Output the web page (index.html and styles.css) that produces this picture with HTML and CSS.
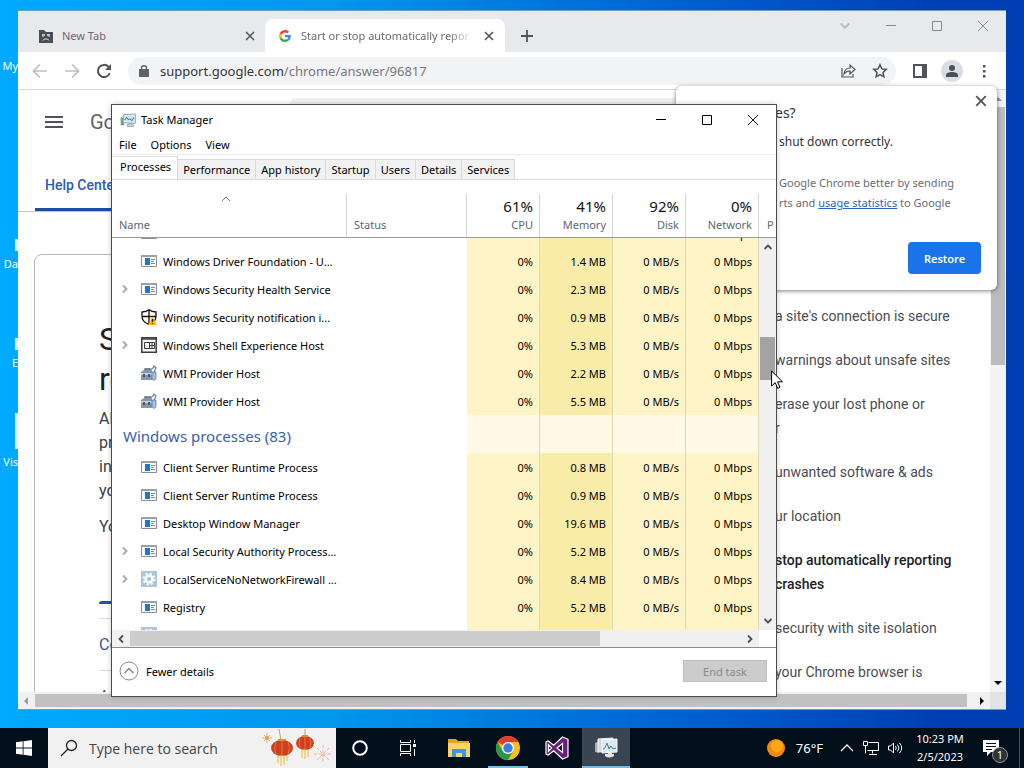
FILE: index.html
```html
<!DOCTYPE html>
<html lang="en">
  <head>
    <meta charset="UTF-8" />
    <meta name="viewport" content="width=device-width, initial-scale=1.0" />
    <title>Desktop</title>
    <link rel="stylesheet" href="styles.css">
  </head>
  <body>
    <!-- shared icons -->
    <svg class="defs" aria-hidden="true">
      <symbol id="i-app" viewBox="0 0 16 16">
        <path fill="#f8f9fa" stroke="#8a8f94" d="M.5 2.500h15v11H.5z" />
        <path fill="#9aa0a6" d="M0 2h16v2H0z" />
        <path fill="#1979ca" d="M4 5h5v7H4z" />
        <path stroke="#7d92a5" d="M10 6.500h4M10 8.500h3M10 10.500h4" />
      </symbol>
      <symbol id="i-shield" viewBox="0 0 16 16">
        <path fill="#fff" stroke="#111" stroke-width="1.300" d="M8 .8C6 2.400 3.500 3 1 3v4c0 4 3 7 7 8.500C12 14 15 11 15 7V3c-2.500 0-5-.6-7-2.200zM8 1v14M1 7.500h14" />
        <path fill="#fdb913" d="M11.500 7.500 16 16H7z" />
        <path stroke="#222" stroke-width="1.400" d="M11.500 10v3M11.500 14v1" />
      </symbol>
      <symbol id="i-shell" viewBox="0 0 16 16">
        <path fill="#fff" stroke="#3b3b3b" stroke-width="1.500" d="M.8.8h14.400v14.400H.8z" />
        <path stroke="#3b3b3b" stroke-width="1.500" d="M1 2h14" />
        <path fill="none" stroke="#3b3b3b" d="M3.500 5.500h10v6h-10zM8.500 5.500v6M8.500 8.500h5M11 5.500v6" />
      </symbol>
      <symbol id="i-wmi" viewBox="0 0 16 16">
        <path fill="none" stroke="#555f6b" stroke-width="1.300" d="M4 6V4h5v2" />
        <path fill="#8497ab" d="m0 7 3-2h8v10H0z" />
        <path fill="#c6d2de" d="M0 8h11v2H0z" />
        <path fill="#46566a" d="M2 9h2v3H2zM7 9h2v3H7z" />
        <path fill="#a5bfe8" stroke="#53719c" stroke-width=".7" d="M11 7h4v7l-2 1.500-2-1.500z" />
        <path fill="none" stroke="#7b8da1" stroke-width="1.400" d="m9 5 3-2 1-2 2 2-2 4" />
      </symbol>
      <symbol id="i-gear" viewBox="0 0 16 16">
        <path fill="#adc6da" d="M0 0h16v16H0z" />
        <circle cx="8" cy="8" r="3.400" fill="none" stroke="#fff" stroke-width="2.400" />
        <circle cx="8" cy="8" r="5.400" fill="none" stroke="#fff" stroke-width="2" stroke-dasharray="2.100 2.140" />
      </symbol>
      <symbol id="i-x" viewBox="0 0 10 10"><path fill="none" stroke="currentColor" stroke-width="1.500" d="m1 1 8 8M9 1 1 9" /></symbol>
      <symbol id="i-thin-x" viewBox="0 0 10 10"><path fill="none" stroke="currentColor" stroke-width=".9" d="m0 0 10 10M10 0 0 10" /></symbol>
      <symbol id="i-max" viewBox="0 0 10 10"><path fill="none" stroke="currentColor" d="M.5 .5h9v9h-9z" /></symbol>
      <symbol id="i-min" viewBox="0 0 10 10"><path stroke="currentColor" d="M0 4.500h10" /></symbol>
      <symbol id="i-up" viewBox="0 0 10 10"><path fill="none" stroke="currentColor" stroke-width="1.800" d="m1.500 7 3.500-3.500L8.500 7" /></symbol>
      <symbol id="i-down" viewBox="0 0 10 10"><path fill="none" stroke="currentColor" stroke-width="1.800" d="M1.500 3 5 6.500 8.500 3" /></symbol>
      <symbol id="i-left" viewBox="0 0 10 10"><path fill="none" stroke="currentColor" stroke-width="1.800" d="M7 1.500 3.500 5 7 8.500" /></symbol>
      <symbol id="i-right" viewBox="0 0 10 10"><path fill="none" stroke="currentColor" stroke-width="1.800" d="M3 1.500 6.500 5 3 8.500" /></symbol>
      <symbol id="i-monitor" viewBox="0 0 24 24">
        <path fill="#8b9398" d="M1 8h5v12H1z" />
        <path fill="#5fae63" d="M2 10h2v8H2z" />
        <path fill="#e9f6fb" stroke="#8fa3ad" stroke-width="1.500" d="m5 4 18-1v14l-18-1z" />
        <path fill="#c6e4ef" d="m7 6 14-1v10L7 14z" />
        <path fill="none" stroke="#287aa9" stroke-width="1.500" d="m7 12 3-4 3 4 2-2 3 3 3-5" />
        <path fill="#cfd5d8" stroke="#89949a" d="M13 17h4v2h3v3h-9v-3h2z" />
      </symbol>
    </svg>

    <main class="desktop">
      <div class="shortcut shortcut-1">My</div>
      <div class="shortcut shortcut-2"><span class="shortcut-icon"></span>Da</div>
      <div class="shortcut shortcut-3"><span class="shortcut-icon"></span>E</div>
      <div class="shortcut shortcut-4"><span class="shortcut-icon tall"></span>Vis</div>

      <!-- browser window -->
      <section class="browser">
        <div class="tab-strip">
          <div class="browser-tab">
            <svg class="icon-16" viewBox="0 0 16 16"><path fill="#4a4d51" d="M1 2h5l2 2h7v11H1z" /><path stroke="#e8eaed" stroke-width="1.300" d="M4 7h3M9 7h3" /><path fill="none" stroke="#e8eaed" d="M5 12.500 6.500 11h3l1.500 1.500M5 8v1M11 8v1" /></svg>
            <span class="tab-title">New Tab</span>
            <button class="icon-btn" aria-label="Close tab"><svg class="icon-10"><use href="#i-x" /></svg></button>
          </div>
          <div class="browser-tab active">
            <svg class="icon-12" viewBox="0 0 48 48"><path fill="#ea4335" d="M24 9.500c3.540 0 6.710 1.220 9.210 3.600l6.850-6.850C35.900 2.380 30.470 0 24 0 14.620 0 6.510 5.380 2.560 13.220l7.980 6.190C12.430 13.720 17.740 9.500 24 9.500z" /><path fill="#4285f4" d="M46.980 24.550c0-1.570-.15-3.090-.38-4.550H24v9.020h12.940c-.58 2.960-2.260 5.480-4.780 7.180l7.730 6c4.510-4.180 7.090-10.360 7.090-17.650z" /><path fill="#fbbc05" d="M10.530 28.590c-.48-1.450-.76-2.990-.76-4.590s.27-3.140.76-4.590l-7.980-6.190C.92 16.460 0 20.120 0 24c0 3.880.92 7.540 2.560 10.780l7.970-6.190z" /><path fill="#34a853" d="M24 48c6.480 0 11.930-2.130 15.890-5.810l-7.730-6c-2.150 1.450-4.920 2.300-8.160 2.300-6.260 0-11.570-4.220-13.470-9.910l-7.980 6.190C6.510 42.620 14.620 48 24 48z" /></svg>
            <span class="tab-title">Start or stop automatically repor</span>
            <button class="icon-btn" aria-label="Close tab"><svg class="icon-10"><use href="#i-x" /></svg></button>
          </div>
          <button class="icon-btn new-tab" aria-label="New tab"><svg class="icon-12" viewBox="0 0 12 12"><path stroke="currentColor" stroke-width="1.800" d="M6 0v12M0 6h12" /></svg></button>
          <div class="captions">
            <button class="caption pale" aria-label="Search tabs"><svg class="icon-12"><use href="#i-down" /></svg></button>
            <button class="caption" aria-label="Minimize"><svg class="icon-10"><use href="#i-min" /></svg></button>
            <button class="caption" aria-label="Maximize"><svg class="icon-10"><use href="#i-max" /></svg></button>
            <button class="caption" aria-label="Close"><svg class="icon-10"><use href="#i-thin-x" /></svg></button>
          </div>
        </div>

        <div class="toolbar">
          <button class="icon-btn faded" aria-label="Back"><svg class="icon-16" viewBox="0 0 16 16"><path fill="none" stroke="currentColor" stroke-width="1.700" d="M15 8H2M8 1.500 1.500 8 8 14.500" /></svg></button>
          <button class="icon-btn faded" aria-label="Forward"><svg class="icon-16" viewBox="0 0 16 16"><path fill="none" stroke="currentColor" stroke-width="1.700" d="M1 8h13M8 1.500 14.500 8 8 14.500" /></svg></button>
          <button class="icon-btn" aria-label="Reload"><svg class="icon-16" viewBox="0 0 16 16"><path fill="none" stroke="currentColor" stroke-width="2" d="M13.800 10A6.100 6.100 0 1 1 12.500 3.800L14 5.500" /><path fill="currentColor" d="M15 1v6H9z" /></svg></button>
          <div class="address">
            <svg class="icon-12" viewBox="0 0 12 12"><path fill="#5f6368" d="M1 4h10v8H1z" /><path fill="none" stroke="#5f6368" stroke-width="1.400" d="M3.500 5V3a2.500 2.300 0 0 1 5 0v2" /></svg>
            <span class="url"><b>support.google.com</b>/chrome/answer/96817</span>
            <button class="icon-btn" aria-label="Share"><svg class="icon-16" viewBox="0 0 16 16"><path fill="none" stroke="currentColor" stroke-width="1.200" d="M2 5v9h11v-3M4 11c.5-4 3-6 6-6V2l5 4.500L10 11V8c-3 0-4.500 1-6 3z" /></svg></button>
            <button class="icon-btn" aria-label="Bookmark"><svg class="icon-16" viewBox="0 0 16 16"><path fill="none" stroke="currentColor" stroke-width="1.500" d="m8 1.800 1.900 4.100 4.400.5-3.300 3 .9 4.400L8 11.600l-3.900 2.200.9-4.400-3.300-3 4.400-.5z" /></svg></button>
          </div>
          <div class="tools">
            <button class="icon-btn" aria-label="Side panel"><svg class="icon-16" viewBox="0 0 16 16"><path fill="none" stroke="currentColor" stroke-width="2" d="M2 2h12v12H2z" /><path fill="currentColor" d="M10 2h5v12h-5z" /></svg></button>
            <button class="icon-btn profile" aria-label="Profile"><svg class="icon-16" viewBox="0 0 16 16"><circle cx="8" cy="5" r="3" fill="#4c5055" /><path fill="#4c5055" d="M2 14v-2c0-4 12-4 12 0v2z" /></svg></button>
            <button class="icon-btn" aria-label="Menu"><svg class="icon-16" viewBox="0 0 16 16"><path fill="currentColor" d="M7 2h2.500v2.500H7zM7 7h2.500v2.500H7zM7 12h2.500v2.500H7z" /></svg></button>
          </div>
        </div>

        <div class="viewport">
          <div class="page">
            <header class="page-header">
              <button class="icon-btn" aria-label="Main menu"><svg class="icon-18" viewBox="0 0 18 18"><path stroke="currentColor" stroke-width="2" d="M0 4h18M0 9h18M0 14h18" /></svg></button>
              <span class="logo">Google</span>
              <input class="page-search" type="text" aria-label="Search help" />
            </header>
            <nav class="page-nav"><a href="#">Help Center</a></nav>
            <div class="page-columns">
              <article class="article">
                <h1>Start<br />report</h1>
                <p>Allow<br />problem<br />in Chrome<br />you use</p>
                <p>You can</p>
                <div class="article-tab"></div>
                <a class="article-link" href="#">Computer</a>
                <a class="article-link" href="#">Android</a>
              </article>
              <ul class="related">
                <li><a href="#">a site's connection is secure</a></li>
                <li><a href="#">warnings about unsafe sites</a></li>
                <li><a href="#">erase your lost phone or<br />r</a></li>
                <li><a href="#">unwanted software &amp; ads</a></li>
                <li><a href="#">ur location</a></li>
                <li><a class="current" href="#">stop automatically reporting<br />crashes</a></li>
                <li><a href="#">security with site isolation</a></li>
                <li><a href="#">your Chrome browser is</a></li>
              </ul>
            </div>
          </div>
          <div class="page-vscroll"><svg class="icon-10 faint" viewBox="0 0 10 10"><path d="m1 7 4-4 4 4z" /></svg><span class="page-vthumb"></span><svg class="icon-10" viewBox="0 0 10 10"><path d="m1 3 4 4 4-4z" /></svg></div>
          <div class="page-hscroll"><svg class="icon-10 faint" viewBox="0 0 10 10"><path d="M7 1 3 5l4 4z" /></svg><span class="page-hthumb"></span><svg class="icon-10" viewBox="0 0 10 10"><path d="m3 1 4 4-4 4z" /></svg></div>
          <div class="scroll-corner"></div>
        </div>

        <aside class="bubble">
          <button class="icon-btn bubble-close" aria-label="Close"><svg class="icon-12"><use href="#i-x" /></svg></button>
          <h2>es?</h2>
          <p class="bubble-text">shut down correctly.</p>
          <p class="bubble-note">Google Chrome better by sending<br />rts and <a href="#">usage statistics</a> to Google</p>
          <button class="restore">Restore</button>
        </aside>
      </section>

      <!-- task manager window -->
      <section class="taskman">
        <div class="titlebar">
          <svg class="icon-16"><use href="#i-monitor" /></svg>
          <span class="title">Task Manager</span>
          <button class="caption" aria-label="Minimize"><svg class="icon-10"><use href="#i-min" /></svg></button>
          <button class="caption" aria-label="Maximize"><svg class="icon-10"><use href="#i-max" /></svg></button>
          <button class="caption" aria-label="Close"><svg class="icon-10"><use href="#i-thin-x" /></svg></button>
        </div>
        <div class="menubar"><button>File</button><button>Options</button><button>View</button></div>
        <div class="tabs" role="tablist">
          <button role="tab" aria-selected="true" class="selected">Processes</button>
          <button role="tab">Performance</button>
          <button role="tab">App history</button>
          <button role="tab">Startup</button>
          <button role="tab">Users</button>
          <button role="tab">Details</button>
          <button role="tab">Services</button>
        </div>

        <table class="grid grid-head">
          <colgroup><col class="c-name" /><col class="c-status" /><col class="c-num" /><col class="c-num" /><col class="c-num" /><col class="c-num" /><col /></colgroup>
          <thead>
            <tr>
              <th class="left"><svg class="sort" viewBox="0 0 10 10"><path fill="none" stroke="#777" d="m1 7 4-4 4 4" /></svg>Name</th>
              <th class="left">Status</th>
              <th><strong>61%</strong>CPU</th>
              <th><strong>41%</strong>Memory</th>
              <th><strong>92%</strong>Disk</th>
              <th><strong>0%</strong>Network</th>
              <th class="last">P</th>
            </tr>
          </thead>
        </table>

        <div class="list">
          <div class="rows">
            <table class="grid grid-body">
              <colgroup><col class="c-name" /><col class="c-status" /><col class="c-num" /><col class="c-num" /><col class="c-num" /><col /></colgroup>
              <tbody>
                <tr><td><div class="proc"><svg class="icon-16"><use href="#i-app" /></svg></div></td><td></td><td></td><td class="mem"></td><td>0 MB/s</td><td>0 Mbps</td></tr>
                <tr><td><div class="proc"><svg class="icon-16"><use href="#i-app" /></svg>Windows Driver Foundation - U...</div></td><td></td><td>0%</td><td class="mem">1.4 MB</td><td>0 MB/s</td><td>0 Mbps</td></tr>
                <tr><td><div class="proc"><svg class="expand"><use href="#i-right" /></svg><svg class="icon-16"><use href="#i-app" /></svg>Windows Security Health Service</div></td><td></td><td>0%</td><td class="mem">2.3 MB</td><td>0 MB/s</td><td>0 Mbps</td></tr>
                <tr><td><div class="proc"><svg class="icon-16"><use href="#i-shield" /></svg>Windows Security notification i...</div></td><td></td><td>0%</td><td class="mem">0.9 MB</td><td>0 MB/s</td><td>0 Mbps</td></tr>
                <tr><td><div class="proc"><svg class="expand"><use href="#i-right" /></svg><svg class="icon-16"><use href="#i-shell" /></svg>Windows Shell Experience Host</div></td><td></td><td>0%</td><td class="mem">5.3 MB</td><td>0 MB/s</td><td>0 Mbps</td></tr>
                <tr><td><div class="proc"><svg class="icon-16"><use href="#i-wmi" /></svg>WMI Provider Host</div></td><td></td><td>0%</td><td class="mem">2.2 MB</td><td>0 MB/s</td><td>0 Mbps</td></tr>
                <tr><td><div class="proc"><svg class="icon-16"><use href="#i-wmi" /></svg>WMI Provider Host</div></td><td></td><td>0%</td><td class="mem">5.5 MB</td><td>0 MB/s</td><td>0 Mbps</td></tr>
                <tr class="group"><td colspan="2">Windows processes (83)</td><td></td><td></td><td></td><td></td></tr>
                <tr><td><div class="proc"><svg class="icon-16"><use href="#i-app" /></svg>Client Server Runtime Process</div></td><td></td><td>0%</td><td class="mem">0.8 MB</td><td>0 MB/s</td><td>0 Mbps</td></tr>
                <tr><td><div class="proc"><svg class="icon-16"><use href="#i-app" /></svg>Client Server Runtime Process</div></td><td></td><td>0%</td><td class="mem">0.9 MB</td><td>0 MB/s</td><td>0 Mbps</td></tr>
                <tr><td><div class="proc"><svg class="icon-16"><use href="#i-app" /></svg>Desktop Window Manager</div></td><td></td><td>0%</td><td class="mem">19.6 MB</td><td>0 MB/s</td><td>0 Mbps</td></tr>
                <tr><td><div class="proc"><svg class="expand"><use href="#i-right" /></svg><svg class="icon-16"><use href="#i-app" /></svg>Local Security Authority Process...</div></td><td></td><td>0%</td><td class="mem">5.2 MB</td><td>0 MB/s</td><td>0 Mbps</td></tr>
                <tr><td><div class="proc"><svg class="expand"><use href="#i-right" /></svg><svg class="icon-16"><use href="#i-gear" /></svg>LocalServiceNoNetworkFirewall ...</div></td><td></td><td>0%</td><td class="mem">8.4 MB</td><td>0 MB/s</td><td>0 Mbps</td></tr>
                <tr><td><div class="proc"><svg class="icon-16"><use href="#i-app" /></svg>Registry</div></td><td></td><td>0%</td><td class="mem">5.2 MB</td><td>0 MB/s</td><td>0 Mbps</td></tr>
                <tr><td><div class="proc"><svg class="icon-16"><use href="#i-gear" /></svg></div></td><td></td><td></td><td class="mem"></td><td></td><td></td></tr>
              </tbody>
            </table>
          </div>
          <div class="vscroll"><svg class="icon-10"><use href="#i-up" /></svg><span class="vthumb"></span><svg class="icon-10"><use href="#i-down" /></svg></div>
        </div>
        <div class="hscroll"><svg class="icon-10"><use href="#i-left" /></svg><span class="htrack"><span class="hthumb"></span></span><svg class="icon-10"><use href="#i-right" /></svg></div>

        <div class="statusbar">
          <button class="fewer"><svg class="icon-20" viewBox="0 0 20 20"><circle cx="10" cy="10" r="9" fill="#fff" stroke="#8a8a8a" /><path fill="none" stroke="#8a8a8a" stroke-width="1.500" d="m5.500 12 4.500-4.500 4.500 4.500" /></svg>Fewer details</button>
          <button class="end-task" disabled>End task</button>
        </div>
      </section>

      <svg class="cursor" viewBox="0 0 12 19"><path fill="#fff" stroke="#000" d="M.6 1v15l3.600-3.300 2.500 5.600 2.300-1-2.500-5.500h5z" /></svg>
    </main>

    <footer class="taskbar">
      <button class="task-btn" aria-label="Start"><svg class="icon-16" viewBox="0 0 16 16"><path fill="#fff" d="m0 2.300 6.700-1v6.300H0zM7.500 1.200 16 0v7.600H7.500zM0 8.400h6.700v6.300l-6.700-1zM7.500 8.400H16V16l-8.500-1.200z" /></svg></button>
      <label class="search">
        <svg class="icon-18" viewBox="0 0 18 18"><circle cx="11.500" cy="6.500" r="5" fill="none" stroke="#222" stroke-width="1.300" /><path stroke="#222" stroke-width="1.300" d="m8 10-7 7" /></svg>
        <input type="text" placeholder="Type here to search" aria-label="Type here to search" />
        <svg class="lanterns" viewBox="0 0 70 38">
          <path fill="none" stroke="#eeb46c" d="M6 4v10M1 9h10M3 6l6 6M9 6l-6 6" />
          <circle cx="6" cy="9" r="2" fill="#e9a04b" />
          <path fill="none" stroke="#f0a08c" stroke-width=".8" d="M62 16v18M53 25h17M56 19l12 12M68 19 56 31" stroke-dasharray="3 1.500" />
          <path stroke="#b58a60" stroke-width=".8" d="M18 0l2 11M44 0v8" />
          <path stroke="#f2c84f" stroke-width="1.200" d="M17 26v8M20 26v11M23 26v10M26 26v6M41 21v8M44 21v9M47 21v7" />
          <ellipse cx="21" cy="19" rx="11" ry="8" fill="#cf4020" /><path fill="none" stroke="#e8743a" d="M15 13q-3 6 0 12M21 11v16M27 13q3 6 0 12" />
          <ellipse cx="44" cy="14" rx="9" ry="7" fill="#cf4020" /><path fill="none" stroke="#e8743a" d="M39 9q-2 5 0 10M44 7v14M49 9q2 5 0 10" />
          <path fill="#dc8f2b" d="M17 10h8v2h-8zM17 26h8v1h-8zM41 6h6v2h-6zM41 20h6v1h-6z" />
        </svg>
      </label>
      <button class="task-btn" aria-label="Cortana"><svg class="icon-16" viewBox="0 0 16 16"><circle cx="8" cy="8" r="6.800" fill="none" stroke="#fff" stroke-width="2" /></svg></button>
      <button class="task-btn" aria-label="Task view"><svg class="icon-18" viewBox="0 0 18 18"><path fill="none" stroke="#fff" d="M1.500 5.500h10v7h-10zM1.500 1v2.500h10V1M1.500 17v-2.500h10V17M15.500 1v3M15.500 10v7" /><path fill="#fff" d="M14 5h3v3h-3z" /></svg></button>
      <div class="pinned">
        <button class="task-btn" aria-label="File Explorer"><svg class="icon-24" viewBox="0 0 24 24"><path fill="#e9a023" d="M1 3h8l2 2h11v5H1z" /><path fill="#fcd462" d="M1 7h22v14H1z" /><path fill="#3a9bdc" d="M5 13h14v8h-4v-4H9v4H5z" /></svg></button>
        <button class="task-btn running" aria-label="Google Chrome"><svg class="icon-24" viewBox="0 0 24 24"><circle cx="12" cy="12" r="12" fill="#fbc116" /><path fill="#e33b2e" d="M12 12 1.600 6A12 12 0 0 1 22.400 6H12z" /><path fill="#26994a" d="M1.600 6A12 12 0 0 0 12 24l5.200-9L12 12 6.800 15z" /><circle cx="12" cy="12" r="6" fill="#fff" /><circle cx="12" cy="12" r="4.700" fill="#3c7de6" /></svg></button>
        <button class="task-btn" aria-label="Visual Studio"><svg class="icon-24" viewBox="0 0 24 24"><path fill="#68217a" stroke="#fff" stroke-width="1.200" d="m17.500 1 5.500 2.300v17.400L17.500 23 8.700 14.800 3.200 19 1 18V6l2.200-1 5.500 4.200zM17.500 7.500 12 12l5.500 4.500zM3.500 8.800v6.400L6.500 12z" fill-rule="evenodd" /></svg></button>
        <button class="task-btn open" aria-label="Task Manager"><svg class="icon-24" viewBox="0 0 24 24">
          <path fill="#a9afb3" d="m1 8 4-2v12l-4-1z" />
          <path fill="#d5dadd" stroke="#f1f3f4" d="m4 4 15-1v13L4 17z" />
          <path fill="#dce9ef" stroke="#f6f8f9" d="m8 5 15-1v13l-15 1z" />
          <path fill="none" stroke="#4487a8" d="m9 14 2-1 2-5 2 6 2-3 2 3 3-1" />
          <path fill="#e2e4e5" d="M14 18h4v1h2v2q-5 3-9 0v-2h3z" />
        </svg></button>
      </div>
      <div class="tray">
        <button class="weather"><svg class="icon-18" viewBox="0 0 18 18"><circle cx="9" cy="9" r="9" fill="#f58a07" /><circle cx="10" cy="7" r="6" fill="#fca81c" /></svg>76°F</button>
        <button class="tray-btn" aria-label="Hidden icons"><svg class="icon-14" viewBox="0 0 14 14"><path fill="none" stroke="#fff" stroke-width="1.300" d="m1 10 6-6 6 6" /></svg></button>
        <button class="tray-btn" aria-label="Network"><svg class="icon-16" viewBox="0 0 16 16"><path fill="none" stroke="#fff" d="M5.500 2.500h10v8h-11M9.500 10.500v3M6 14.500h8M.5 1.500h4v4h-4zM2.500 5.500v8" /></svg></button>
        <button class="tray-btn" aria-label="Volume"><svg class="icon-16" viewBox="0 0 16 16"><path fill="none" stroke="#fff" d="M1.500 6h2l3-3v10l-3-3h-2zM8.500 6q1.500 2 0 4M10.500 4.500q3 3.500 0 7M12.500 3q4.500 5 0 10" /></svg></button>
        <button class="clock">10:23 PM<br />2/5/2023</button>
        <button class="notify" aria-label="Notifications"><svg class="icon-18" viewBox="0 0 18 18"><path fill="#fff" d="M1 1h16v12H9l-4 4v-4H1z" /><path stroke="#06111c" d="M4 4.500h10M4 7.500h10M4 10.500h6" /></svg><span class="badge">1</span></button>
      </div>
    </footer>
  </body>
</html>
```

FILE: styles.css
```css
* {
  box-sizing: border-box;
}

body {
  margin: 0;
  height: 100vh;
  display: flex;
  flex-direction: column;
  overflow: hidden;
  font-family: "Noto Sans", "Open Sans", sans-serif;
  font-size: 11px;
  color: #000;
}

button,
input {
  font: inherit;
  color: inherit;
  border: none;
  background: none;
  padding: 0;
  margin: 0;
}

svg {
  display: block;
  flex: none;
}

.defs {
  position: absolute;
  width: 0;
  height: 0;
}

.icon-10 { width: 10px; height: 10px; }
.icon-12 { width: 12px; height: 12px; }
.icon-14 { width: 14px; height: 14px; }
.icon-16 { width: 16px; height: 16px; }
.icon-18 { width: 18px; height: 18px; }
.icon-20 { width: 20px; height: 20px; }
.icon-24 { width: 24px; height: 24px; }

/* ===== desktop ===== */
.desktop {
  position: relative;
  flex: 1;
  min-height: 0;
  overflow: hidden;
  background: linear-gradient(to right, #00aaff, #0096ec 33%, #0062d2 66%, #003eb4 92%);
}

.shortcut {
  position: absolute;
  left: 0;
  width: 18px;
  display: flex;
  flex-direction: column;
  align-items: flex-end;
  color: #fff;
}

.shortcut-icon {
  width: 3px;
  height: 12px;
  margin-bottom: 5px;
  background: #dceefa;
}

.shortcut-icon.tall {
  height: 36px;
}

.shortcut-1 { top: 58px; }
.shortcut-2 { top: 239px; }
.shortcut-3 { top: 338px; }
.shortcut-4 { top: 413px; }

/* ===== browser ===== */
.browser {
  position: absolute;
  inset: 10px 18px 18px 18px;
  display: flex;
  flex-direction: column;
  background: #fff;
  border: 1px solid #6f9cc0;
  border-width: 1px 0;
}

.icon-btn {
  flex: none;
  display: flex;
  align-items: center;
  justify-content: center;
  color: #505357;
}

.tab-strip {
  display: flex;
  height: 41px;
  padding-left: 7px;
  background: #e8e9ec;
}

.browser-tab {
  display: flex;
  align-items: center;
  gap: 8px;
  width: 240px;
  margin-top: 8px;
  padding: 0 10px 0 13px;
  border-radius: 8px 8px 0 0;
  color: #686b70;
}

.browser-tab.active {
  gap: 10px;
  padding: 0 11px 0 14px;
  background: #fff;
}

.tab-title {
  flex: 1;
  overflow: hidden;
  white-space: nowrap;
}

.active .tab-title {
  mask-image: linear-gradient(to right, #000 85%, transparent);
}

.new-tab {
  width: 44px;
  margin-top: 8px;
}

.captions {
  display: flex;
  margin-left: auto;
}

.caption {
  width: 46px;
  height: 30px;
  display: flex;
  align-items: center;
  justify-content: center;
}

.captions .caption {
  color: #888;
}

.captions .pale {
  color: #b3c0cf;
}

.toolbar {
  display: flex;
  align-items: center;
  gap: 16px;
  height: 38px;
  padding: 0 14px;
  border-bottom: 1px solid #d8dadd;
}

.toolbar .faded {
  color: #bcbec1;
}

.tools {
  display: flex;
  align-items: center;
  gap: 13px;
}

.address {
  flex: 1;
  display: flex;
  align-items: center;
  gap: 16px;
  height: 28px;
  padding: 0 8px 0 10px;
  border-radius: 14px;
  background: #f1f3f4;
}

.address .icon-12 {
  margin-right: -6px;
}

.url {
  flex: 1;
  font-size: 13px;
  color: #777a7e;
}

.url b {
  font-weight: normal;
  color: #333639;
}

.profile {
  width: 22px;
  height: 22px;
  border-radius: 50%;
  background: #d9dee4;
}

.viewport {
  flex: 1;
  min-height: 0;
  display: grid;
  grid-template-columns: 1fr 16px;
  grid-template-rows: 1fr 17px;
}

.page {
  overflow: hidden;
  font-family: Roboto, sans-serif;
  color: #3c4043;
}

.page-header {
  display: flex;
  align-items: center;
  gap: 27px;
  height: 64px;
  padding: 0 27px;
}

.logo {
  width: 172px;
  font-size: 20px;
  color: #5f6368;
}

.page-search {
  flex: 1;
  height: 48px;
  border-radius: 8px;
  background: #f0f1f2;
}

.page-nav {
  height: 58px;
  border-bottom: 1px solid #c2c4c7;
  padding-left: 17px;
  display: flex;
}

.page-nav a {
  padding: 23px 10px 0;
  border-bottom: 3px solid #1a4fa0;
  font-size: 14px;
  font-weight: 500;
  color: #2a5db5;
  text-decoration: none;
}

.page-columns {
  display: flex;
  gap: 80px;
  padding: 42px 16px 0;
}

.article {
  flex: 1;
  height: 520px;
  padding: 64px 0 0 64px;
  border: 1px solid #b5b7ba;
  border-radius: 8px;
  font-size: 16px;
  line-height: 24px;
}

.article h1 {
  margin: 0 0 8px;
  font-size: 32px;
  font-weight: normal;
  line-height: 40px;
  color: #202124;
}

.article p {
  margin: 0 0 12px;
}

.article-tab {
  margin: 62px 0 14px;
  height: 3px;
  border-radius: 4px 4px 0 0;
  background: #2a4f9c;
}

.article-link {
  display: block;
  padding: 14px 0 13px;
  border-top: 1px solid #dadce0;
  color: #3553a0;
  text-decoration: none;
}

.related {
  width: 199px;
  margin: 50px 0 0;
  padding: 0;
  list-style: none;
  display: flex;
  flex-direction: column;
  gap: 20px;
  font-size: 14px;
  line-height: 24px;
  white-space: nowrap;
}

.related a {
  color: #4a4d51;
  text-decoration: none;
}

.related .current {
  color: #202124;
  font-weight: 500;
}

.page-vscroll {
  display: flex;
  flex-direction: column;
  align-items: center;
  padding: 4px 0;
  background: #f4f2f3;
}

.page-vthumb {
  width: 14px;
  height: 258px;
  margin: 3px 0 auto;
  background: #bdbbbd;
}

.page-hscroll {
  display: flex;
  align-items: center;
  gap: 4px;
  padding: 0 3px;
  background: #f1f1f1;
}

.page-hthumb {
  flex: 1;
  height: 13px;
  margin-right: 6px;
  background: #c1c1c1;
}

.scroll-corner {
  background: #e2e3e4;
}

.faint {
  fill: #999;
}

/* ===== restore bubble ===== */
.bubble {
  position: absolute;
  top: 75px;
  right: 9px;
  width: 321px;
  padding: 18px 16px 16px 103px;
  border-radius: 6px;
  background: #fff;
  box-shadow: 0 1px 4px rgba(0, 0, 0, 0.5);
  display: flex;
  flex-direction: column;
}

.bubble-close {
  position: absolute;
  top: 9px;
  right: 10px;
}

.bubble h2 {
  margin: 0 0 10px -4px;
  font-size: 14px;
  font-weight: normal;
  line-height: 18px;
  color: #333;
}

.bubble p {
  margin: 0;
  line-height: 20px;
  white-space: nowrap;
}

.bubble-text {
  font-size: 12px;
  color: #333;
}

.bubble .bubble-note {
  margin: 21px 0 29px;
  color: #6a6d71;
}

.bubble a {
  color: #2b62c4;
}

.restore {
  align-self: flex-end;
  width: 73px;
  height: 32px;
  border-radius: 4px;
  background: #1a73e8;
  color: #fff;
  font-weight: 600;
}

/* ===== task manager ===== */
.taskman {
  position: absolute;
  inset: 104px 247px 31px 111px;
  display: flex;
  flex-direction: column;
  background: #fff;
  border: 1px solid #4c4c4c;
  box-shadow: 0 0 6px rgba(0, 0, 0, 0.2);
}

.titlebar {
  display: flex;
  align-items: center;
  height: 29px;
  padding-left: 8px;
  gap: 5px;
}

.titlebar .caption + .caption {
  margin-left: -5px;
}

.title {
  flex: 1;
}

.menubar {
  display: flex;
  gap: 14px;
  height: 21px;
  padding-left: 7px;
  border-bottom: 1px solid #ececec;
}

.tabs {
  display: flex;
  align-items: flex-end;
  height: 25px;
  border-bottom: 1px solid #dcdcdc;
}

.tabs button {
  height: 20px;
  padding: 0 5px;
  border: 1px solid #dadada;
  border-width: 1px 1px 0 0;
  background: #f1f1f1;
}

.tabs .selected {
  height: 23px;
  padding: 0 6px 3px 8px;
  background: #fff;
}

.grid {
  width: 100%;
  table-layout: fixed;
  border-collapse: separate;
  border-spacing: 0;
}

.c-name { width: 235px; }
.c-status { width: 120px; }
.c-num { width: 73px; }

.grid-head {
  margin-top: 14px;
  border-bottom: 1px solid #9a9a9a;
}

.grid-head th {
  position: relative;
  height: 43px;
  padding: 0 6px 4px;
  border-right: 1px solid #d4d4d4;
  text-align: right;
  vertical-align: bottom;
  font-weight: normal;
  line-height: 16px;
  color: #5c6672;
}

.grid-head .left {
  padding-left: 7px;
  text-align: left;
}

.grid-head .last {
  border-right: none;
  padding: 0 0 4px 8px;
  text-align: left;
}

.grid-head strong {
  display: block;
  font-size: 15px;
  font-weight: normal;
  line-height: 22px;
  color: #111;
}

.sort {
  position: absolute;
  top: 0;
  left: 50%;
  width: 10px;
  height: 10px;
  margin-left: -8px;
}

.list {
  flex: 1;
  min-height: 0;
  display: flex;
}

.rows {
  flex: 1;
  overflow: hidden;
}

/* list is scrolled part of a row down */
.grid-body {
  margin-top: -19px;
}

.grid-body td {
  height: 28px;
  padding: 0 6px 0 0;
  text-align: right;
  white-space: nowrap;
}

.grid-body td:nth-last-child(-n + 4) {
  background: #fff4c5;
  border-right: 1px solid #dfd8b4;
}

.grid-body td.mem:nth-last-child(-n + 4) {
  background: #f9eca8;
}

.proc {
  display: flex;
  align-items: center;
  justify-content: flex-start;
  gap: 6px;
  padding-left: 29px;
}

.expand {
  width: 10px;
  height: 10px;
  margin: 0 5px 0 -21px;
  color: #a8a8a8;
}

.grid-body .group td {
  height: 38px;
}

.grid-body .group td:first-child {
  padding: 4px 0 0 11px;
  text-align: left;
  font-size: 15px;
  color: #3a5eae;
}

.grid-body .group td:nth-last-child(-n + 4) {
  background: #fff9e6;
}

.vscroll {
  width: 17px;
  display: flex;
  flex-direction: column;
  align-items: center;
  padding: 4px 0;
  background: #f0f0f0;
  color: #505050;
}

.vthumb {
  width: 15px;
  height: 43px;
  margin: 85px 0 auto;
  background: #a3a3a3;
}

.hscroll {
  display: flex;
  align-items: center;
  gap: 4px;
  height: 17px;
  margin-right: 17px;
  padding: 0 4px;
  background: #f0f0f0;
  color: #505050;
}

.htrack {
  flex: 1;
  height: 15px;
}

.hthumb {
  display: block;
  width: 77%;
  height: 15px;
  background: #cdcdcd;
}

.statusbar {
  display: flex;
  align-items: center;
  justify-content: space-between;
  height: 49px;
  padding: 0 9px 2px 7px;
  border-top: 1px solid #8c8c8c;
}

.fewer {
  display: flex;
  align-items: center;
  gap: 7px;
}

.end-task {
  width: 84px;
  height: 22px;
  border: 1px solid #bfbfbf;
  background: #cccccc;
  color: #8b8b8b;
}

.cursor {
  position: absolute;
  left: 771px;
  top: 370px;
  width: 12px;
  height: 19px;
}

/* ===== taskbar ===== */
.taskbar {
  display: flex;
  height: 40px;
  background: #03101c;
  color: #fff;
}

.task-btn {
  width: 48px;
  height: 40px;
  display: flex;
  align-items: center;
  justify-content: center;
}

.search {
  width: 288px;
  display: flex;
  align-items: center;
  gap: 11px;
  padding-left: 12px;
  background: #f1f1f1;
}

.search input {
  flex: 1;
  min-width: 0;
  font-family: "Open Sans", sans-serif;
  font-size: 14px;
  outline: none;
}

.search input::placeholder {
  color: #444;
  opacity: 1;
}

.lanterns {
  width: 70px;
  height: 38px;
  margin-right: 5px;
}

.pinned {
  display: flex;
  gap: 1px;
  margin-left: 3px;
}

.running {
  background: linear-gradient(#76b9ed, #76b9ed) center bottom / 40px 2px no-repeat;
}

.open {
  background: #394652;
  border-bottom: 2px solid #76b9ed;
}

.tray {
  display: flex;
  align-items: center;
  margin-left: auto;
  padding-right: 4px;
}

.weather {
  display: flex;
  align-items: center;
  gap: 11px;
  margin-right: 12px;
  font-size: 13px;
}

.tray-btn {
  width: 24px;
  display: flex;
  justify-content: center;
}

.clock {
  width: 66px;
  line-height: 18px;
  text-align: center;
}

.notify {
  position: relative;
  width: 47px;
  height: 40px;
  padding-left: 9px;
  border-right: 1px solid #4b545c;
}

.badge {
  position: absolute;
  left: 19px;
  top: 19px;
  width: 16px;
  height: 16px;
  border: 1px solid #8c9298;
  border-radius: 50%;
  background: #2b333b;
  line-height: 14px;
  text-align: center;
}
```
